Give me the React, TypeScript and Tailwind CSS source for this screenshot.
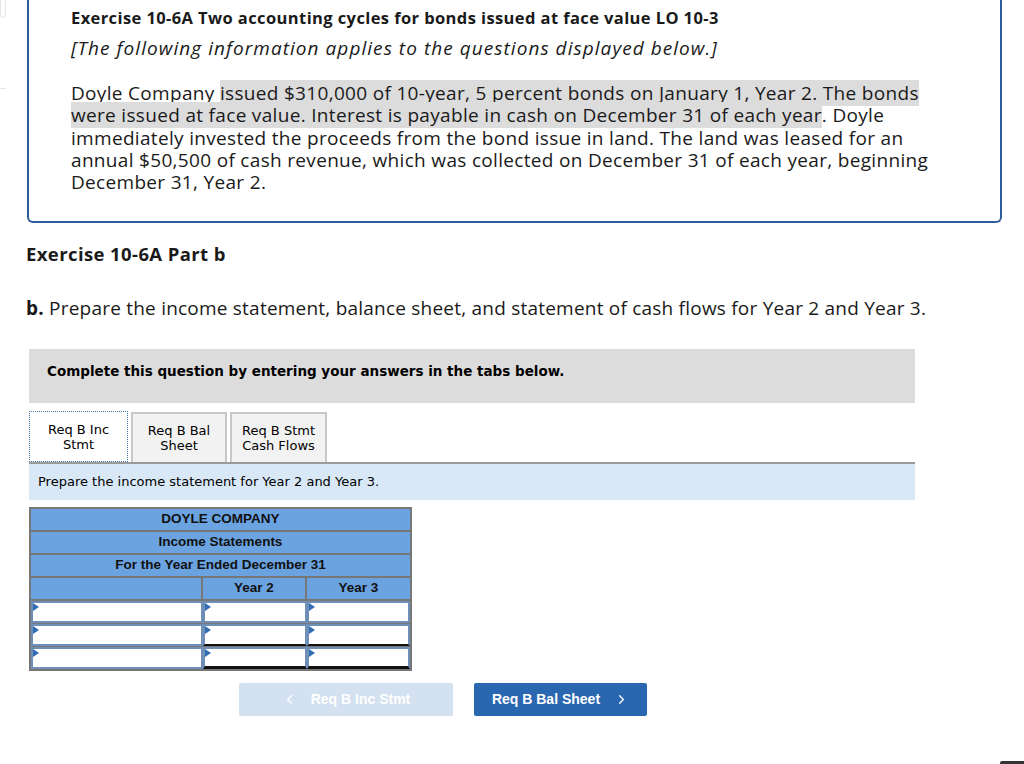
import { ChevronLeft, ChevronRight } from 'lucide-react'

const sans = { fontFamily: '"Open Sans", Lato, sans-serif' }
const verdana = { fontFamily: '"DejaVu Sans", Verdana, sans-serif' }
const arial = { fontFamily: '"Liberation Sans", Arial, sans-serif' }

function Cell({ bottom }: { bottom?: 'single' | 'double' }) {
  return (
    <div
      className={
        'relative h-[22px] bg-white border-2 border-[#6f8fb8] ' +
        (bottom === 'single' ? 'border-b-[#111] ' : '') +
        (bottom === 'double' ? 'border-b-[3px] border-b-[#111] ' : '')
      }
    >
      <span className="absolute left-0 top-0 w-0 h-0 border-y-[4px] border-y-transparent border-l-[6px] border-l-[#2f6db5]" />
    </div>
  )
}

export default function App() {
  return (
    <div className="w-[1024px] h-[764px] relative overflow-hidden bg-white text-[#1a1a1a]" style={sans}>
      <div className="absolute left-0 top-[-8px] w-[6px] h-[26px] border border-[#e4e4e4] rounded-[4px]" />
      <div className="absolute left-0 top-[88px] w-[6px] h-px bg-[#e4e4e4]" />

      <div className="ml-[27px] w-[975px] h-[223px] border-2 border-t-0 border-[#2d5c9a] rounded-b-[6px] pl-[42px] pt-[7px]">
        <h1 className="text-[16.5px] font-bold leading-[22px] tracking-[0.4px] whitespace-nowrap">
          Exercise 10-6A Two accounting cycles for bonds issued at face value LO 10-3
        </h1>
        <p className="mt-[8px] text-[19px] italic leading-[22px] tracking-[1.05px] whitespace-nowrap">
          [The following information applies to the questions displayed below.]
        </p>
        <p className="mt-[23px] text-[19px] leading-[22.3px] tracking-[0.32px] whitespace-nowrap">
          Doyle Company <span className="bg-[#dcdcdc]">issued $310,000 of 10-year, 5 percent bonds on January 1, Year 2. The bonds</span>
          <br />
          <span className="bg-[#dcdcdc]">were issued at face value. Interest is payable in cash on December 31 of each year</span>. Doyle
          <br />
          immediately invested the proceeds from the bond issue in land. The land was leased for an
          <br />
          annual $50,500 of cash revenue, which was collected on December 31 of each year, beginning
          <br />
          December 31, Year 2.
        </p>
      </div>

      <h2 className="ml-[26px] mt-[20px] text-[18.5px] font-bold leading-[22px] tracking-[0.4px]">Exercise 10-6A Part b</h2>
      <p className="ml-[26px] mt-[32px] text-[19px] leading-[22px] tracking-[0.22px] whitespace-nowrap">
        <b>b.</b> Prepare the income statement, balance sheet, and statement of cash flows for Year 2 and Year 3.
      </p>

      <div className="ml-[29px] w-[886px]">
        <div className="mt-[30px] h-[54px] bg-[#dcdcdc] pl-[18px] pt-[13px]">
          <p className="text-[13.5px] font-bold leading-[18px] text-black" style={verdana}>
            Complete this question by entering your answers in the tabs below.
          </p>
        </div>

        <div className="mt-[8px] flex items-end gap-[3px] text-[13px] leading-[15px] text-black" style={verdana}>
          <div className="w-[99px] h-[51px] bg-white border border-dotted border-[#3a6fb0] flex items-center justify-center text-center">
            Req B Inc<br />Stmt
          </div>
          <div className="w-[96px] h-[50px] bg-[#f2f2f2] border-2 border-b-0 border-[#c8c8c8] flex items-center justify-center text-center">
            Req B Bal<br />Sheet
          </div>
          <div className="w-[97px] h-[50px] bg-[#f2f2f2] border-2 border-b-0 border-[#c8c8c8] flex items-center justify-center text-center">
            Req B Stmt<br />Cash Flows
          </div>
        </div>

        <div className="h-[38px] bg-[#d8e8f7] border-t-2 border-[#9a9a9a] pl-[9px] flex items-center">
          <p className="text-[13px] text-black" style={verdana}>Prepare the income statement for Year 2 and Year 3.</p>
        </div>

        <div className="mt-[7px] w-[383px] border-2 border-[#777] bg-[#6aa3e0] text-[13.5px] font-bold text-[#111]" style={arial}>
          <div className="h-[23px] border-b-2 border-[#777] flex items-center justify-center">DOYLE COMPANY</div>
          <div className="h-[23px] border-b-2 border-[#777] flex items-center justify-center">Income Statements</div>
          <div className="h-[23px] border-b-2 border-[#777] flex items-center justify-center">For the Year Ended December 31</div>
          <div className="grid grid-cols-[172px_104px_1fr] h-[23px] border-b-2 border-[#777]">
            <div className="border-r-2 border-[#777]" />
            <div className="border-r-2 border-[#777] flex items-center justify-center">Year 2</div>
            <div className="flex items-center justify-center">Year 3</div>
          </div>
          <div className="grid grid-cols-[172px_104px_1fr] gap-y-[1px] bg-[#777]">
            <Cell />
            <Cell />
            <Cell />
            <Cell />
            <Cell bottom="single" />
            <Cell bottom="single" />
            <Cell />
            <Cell bottom="double" />
            <Cell bottom="double" />
          </div>
        </div>
      </div>

      <div className="ml-[239px] mt-[12px] flex gap-[21px] text-[14px] font-bold text-white" style={arial}>
        <div className="w-[214px] h-[33px] bg-[#d3e1f0] rounded-[2px] flex items-center justify-center gap-[14px]">
          <ChevronLeft size={15} strokeWidth={2} />
          <span>Req B Inc Stmt</span>
        </div>
        <div className="w-[173px] h-[33px] bg-[#2a67b1] rounded-[2px] flex items-center justify-center gap-[14px]">
          <span>Req B Bal Sheet</span>
          <ChevronRight size={15} strokeWidth={2} />
        </div>
      </div>

      <div className="absolute right-0 bottom-0 w-[24px] h-[3px] bg-[#333] rounded-tl-[2px]" />
    </div>
  )
}
